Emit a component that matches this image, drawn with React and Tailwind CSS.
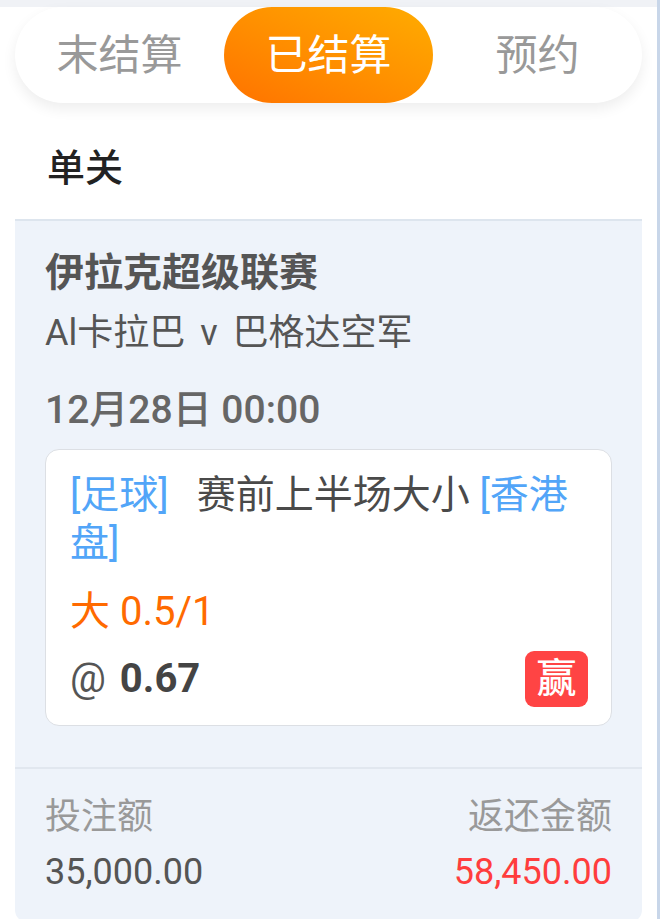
export default function App() {
  const font = { fontFamily: 'Roboto, "Noto Sans CJK SC", sans-serif' };
  return (
    <div className="min-h-screen bg-white flex" style={font}>
      <div className="w-[660px] min-h-screen border-r-[3px] border-[#c8d6e9] flex flex-col">
        {/* top strip */}
        <div className="h-[7px] bg-[#f0f2f6]" />

        {/* tabs */}
        <div className="mx-[15px] h-[96px] rounded-full bg-white shadow-[0_6px_14px_rgba(0,0,0,0.07)] grid grid-cols-3 items-stretch">
          <div className="flex items-center justify-center text-[42px] text-[#999]">末结算</div>
          <div className="flex items-center justify-center text-[42px] text-white rounded-full bg-linear-to-tr from-[#ff7200] to-[#ffac00]">
            已结算
          </div>
          <div className="flex items-center justify-center text-[42px] text-[#999]">预约</div>
        </div>

        {/* card */}
        <div className="mx-[15px] flex flex-col">
          <div className="h-[118px] pt-[14px] flex items-center px-[32px] border-b-2 border-[#dde5ee]">
            <span className="text-[38px] font-medium text-[#222]">单关</span>
          </div>

          <div className="bg-[#eef3fa] rounded-b-[12px] flex flex-col">
            <div className="px-[30px] pt-[28px] pb-[41px] border-b-2 border-[#e1e7ef]">
              <div className="text-[39px] leading-[48px] font-bold text-[#555]">伊拉克超级联赛</div>
              <div className="mt-[12px] text-[36px] leading-[48px] text-[#555] [word-spacing:6px]">Al卡拉巴 v 巴格达空军</div>
              <div className="mt-[29px] text-[39px] leading-[48px] font-medium text-[#666]">12月28日 00:00</div>

              <div className="mt-[15px] bg-white border border-[#dcdfe4] rounded-[14px] pl-[24px] pr-[23px] pt-[21px] pb-[18px]">
                <div className="text-[39px] leading-[48px] text-[#4a4a4a]">
                  <span className="text-[#52a5f8] mr-[28px]">[足球]</span>
                  赛前上半场大小 <span className="text-[#52a5f8]">[香港盘]</span>
                </div>
                <div className="mt-[21px] text-[40px] leading-[48px] text-[#ff6a00]">大 0.5/1</div>
                <div className="mt-[15px] flex items-center justify-between">
                  <div className="text-[40px] leading-[48px] text-[#555]">
                    @ <span className="ml-[4px] font-bold text-[#444]">0.67</span>
                  </div>
                  <div className="w-[63px] h-[56px] rounded-[9px] bg-[#ff4444] flex items-center justify-center text-white text-[40px] font-medium">
                    赢
                  </div>
                </div>
              </div>
            </div>

            <div className="px-[30px] pt-[26px] pb-[28px] flex justify-between">
              <div className="flex flex-col">
                <span className="text-[36px] leading-[44px] text-[#999]">投注额</span>
                <span className="mt-[11px] text-[36px] leading-[44px] text-[#555]">35,000.00</span>
              </div>
              <div className="flex flex-col items-end">
                <span className="text-[36px] leading-[44px] text-[#999]">返还金额</span>
                <span className="mt-[11px] text-[36px] leading-[44px] text-[#ff3d3d]">58,450.00</span>
              </div>
            </div>
          </div>
        </div>
      </div>
    </div>
  );
}
